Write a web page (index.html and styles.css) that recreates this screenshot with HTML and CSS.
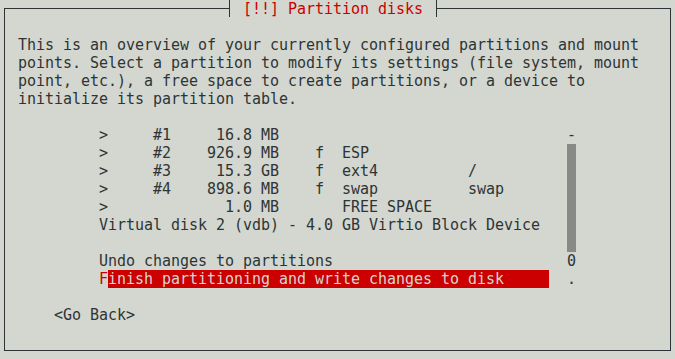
FILE: index.html
```html
<!DOCTYPE html>
<html lang="en">
<head>
  <meta charset="UTF-8" />
  <title>Partition disks</title>
  <link rel="stylesheet" href="styles.css">
</head>
<body>

  <div class="screen">
    <div class="dialog">
      <div class="dialog-title">[!!] Partition disks</div>

      <div class="dialog-body">
        <p class="intro">This is an overview of your currently configured partitions and mount
points. Select a partition to modify its settings (file system, mount
point, etc.), a free space to create partitions, or a device to
initialize its partition table.</p>

        <div class="listbox">
          <ul class="menu">
            <li>&gt;     #1     16.8 MB</li>
            <li>&gt;     #2    926.9 MB    f  ESP</li>
            <li>&gt;     #3     15.3 GB    f  ext4          /</li>
            <li>&gt;     #4    898.6 MB    f  swap          swap</li>
            <li>&gt;             1.0 MB       FREE SPACE</li>
            <li>Virtual disk 2 (vdb) - 4.0 GB Virtio Block Device</li>
            <li> </li>
            <li>Undo changes to partitions</li>
            <li class="selected"><span class="hotkey">F</span><span class="rest">inish partitioning and write changes to disk</span></li>
          </ul>

          <div class="scrollbar">
            <span class="arrow">-</span>
            <span class="thumb"></span>
            <span class="thumb"></span>
            <span class="thumb"></span>
            <span class="thumb"></span>
            <span class="thumb"></span>
            <span class="thumb"></span>
            <span>0</span>
            <span>.</span>
          </div>
        </div>

        <div class="buttons">
          <span class="button">&lt;Go Back&gt;</span>
        </div>
      </div>
    </div>
  </div>

</body>
</html>
```

FILE: styles.css
```css
body {
  margin: 0;
  background: #d3d7cf;
  color: #2e3436;
  font-family: 'DejaVu Sans Mono', monospace;
  font-size: 15px;
  line-height: 18px;
  letter-spacing: -0.03px;
}

/* one character cell = 9px x 18px */
.screen {
  padding: 8px 4px;
}

.dialog {
  position: relative;
  border: 1px solid #2e3436;
  height: 341px;
}

.dialog-title {
  position: absolute;
  top: -9px;
  left: 224px;
  height: 17px;
  padding: 0 13px;
  background: #d3d7cf;
  border-left: 1px solid #2e3436;
  border-right: 1px solid #2e3436;
  color: #cc0000;
  white-space: pre;
}

.dialog-body {
  padding: 9px 0 0 4px;
}

.intro {
  margin: 18px 0 18px 9px;
  white-space: pre-line;
}

.listbox {
  display: flex;
  margin-left: 90px;
}

.menu {
  list-style: none;
  margin: 0;
  padding: 0;
  width: 450px;
}

.menu li {
  height: 18px;
  white-space: pre;
}

.menu .selected {
  display: flex;
}

.hotkey {
  color: #cc0000;
}

.rest {
  flex: 1;
  background: #cc0000;
  color: #d3d7cf;
}

.scrollbar {
  display: flex;
  flex-direction: column;
  width: 9px;
  margin-left: 18px;
}

.scrollbar span {
  height: 18px;
  text-align: center;
}

.scrollbar .thumb {
  background: #888a85;
}

.buttons {
  margin: 18px 0 0 45px;
}
```
